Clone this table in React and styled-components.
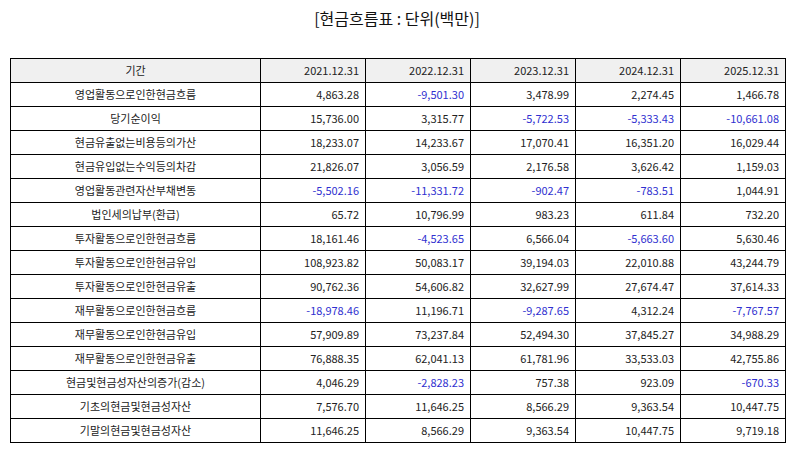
import React from 'react'
import styled, {createGlobalStyle} from 'styled-components'

const GlobalStyle = createGlobalStyle`
  body {
    margin: 0;
    background: #fff;
    font-family: "Noto Sans CJK KR", "Noto Sans", sans-serif;
    color: #222;
  }
`;

const years = ['2021.12.31', '2022.12.31', '2023.12.31', '2024.12.31', '2025.12.31'];

const rows = [
  ['영업활동으로인한현금흐름', '4,863.28', '-9,501.30', '3,478.99', '2,274.45', '1,466.78'],
  ['당기순이익', '15,736.00', '3,315.77', '-5,722.53', '-5,333.43', '-10,661.08'],
  ['현금유출없는비용등의가산', '18,233.07', '14,233.67', '17,070.41', '16,351.20', '16,029.44'],
  ['현금유입없는수익등의차감', '21,826.07', '3,056.59', '2,176.58', '3,626.42', '1,159.03'],
  ['영업활동관련자산부채변동', '-5,502.16', '-11,331.72', '-902.47', '-783.51', '1,044.91'],
  ['법인세의납부(환급)', '65.72', '10,796.99', '983.23', '611.84', '732.20'],
  ['투자활동으로인한현금흐름', '18,161.46', '-4,523.65', '6,566.04', '-5,663.60', '5,630.46'],
  ['투자활동으로인한현금유입', '108,923.82', '50,083.17', '39,194.03', '22,010.88', '43,244.79'],
  ['투자활동으로인한현금유출', '90,762.36', '54,606.82', '32,627.99', '27,674.47', '37,614.33'],
  ['재무활동으로인한현금흐름', '-18,978.46', '11,196.71', '-9,287.65', '4,312.24', '-7,767.57'],
  ['재무활동으로인한현금유입', '57,909.89', '73,237.84', '52,494.30', '37,845.27', '34,988.29'],
  ['재무활동으로인한현금유출', '76,888.35', '62,041.13', '61,781.96', '33,533.03', '42,755.86'],
  ['현금및현금성자산의증가(감소)', '4,046.29', '-2,828.23', '757.38', '923.09', '-670.33'],
  ['기초의현금및현금성자산', '7,576.70', '11,646.25', '8,566.29', '9,363.54', '10,447.75'],
  ['기말의현금및현금성자산', '11,646.25', '8,566.29', '9,363.54', '10,447.75', '9,719.18'],
];

const Page = styled.div`
  padding: 6px 10px 0;
`;

const Title = styled.h1`
  margin: 0;
  height: 52px;
  font-size: 16px;
  font-weight: 400;
  line-height: 24px;
  text-align: center;
  color: #111;
`;

const Table = styled.table`
  width: 774px;
  border-collapse: collapse;
  table-layout: fixed;
  font-size: 11px;
`;

const Col = styled.col`
  width: ${p => (p.$wide ? '250px' : '105px')};
`;

const Cell = styled.td`
  height: 23px;
  padding: 0 6px;
  border: 1px solid #000;
  text-align: ${p => (p.$label ? 'center' : 'right')};
  color: ${p => (p.$neg ? '#3030d0' : '#222')};
  background: #fff;
  white-space: nowrap;
  line-height: 23px;
`;

const HeadCell = styled(Cell).attrs({as: 'th'})`
  font-weight: 400;
  background: #f0f0f0;
`;

export default function App() {
  return (
    <Page>
      <GlobalStyle />
      <Title>[현금흐름표 : 단위(백만)]</Title>
      <Table>
        <colgroup>
          <Col $wide />
          {years.map(y => <Col key={y} />)}
        </colgroup>
        <thead>
          <tr>
            <HeadCell $label>기간</HeadCell>
            {years.map(y => <HeadCell key={y}>{y}</HeadCell>)}
          </tr>
        </thead>
        <tbody>
          {rows.map(([label, ...vals]) => (
            <tr key={label}>
              <Cell $label>{label}</Cell>
              {vals.map((v, i) => (
                <Cell key={i} $neg={v.startsWith('-')}>{v}</Cell>
              ))}
            </tr>
          ))}
        </tbody>
      </Table>
    </Page>
  );
}
